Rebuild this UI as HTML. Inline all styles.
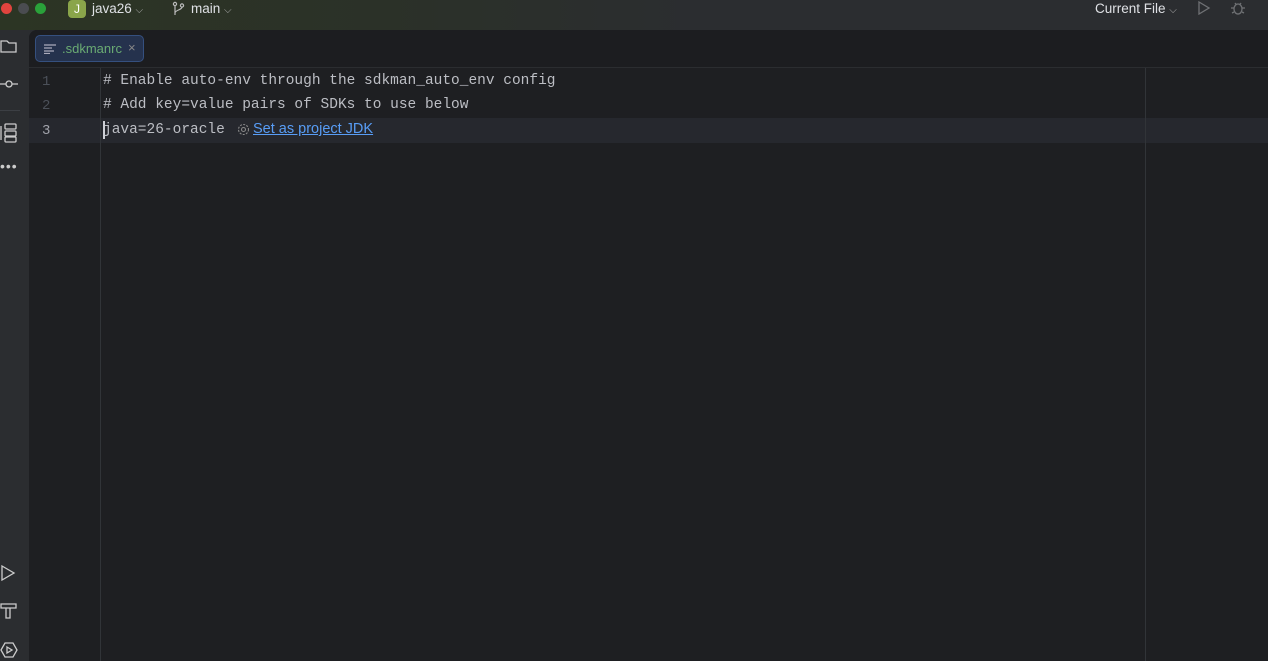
<!DOCTYPE html>
<html><head><meta charset="utf-8"><style>
*{margin:0;padding:0;box-sizing:border-box}
body{width:1268px;height:661px;overflow:hidden;background:#2b2d30;font-family:"Liberation Sans",sans-serif;position:relative}
.title{position:absolute;left:0;top:0;width:1268px;height:30px;background:linear-gradient(90deg,#2c3524 0%,#2b3128 30%,#2b2d30 55%)}
.dot{position:absolute;top:3px;width:11px;height:11px;border-radius:50%}
.t{position:absolute;color:#dfe1e5;font-size:13.5px;top:1px}
.side{position:absolute;left:0;top:30px;width:29px;height:631px;background:#2b2d30}
.ed{position:absolute;left:29px;top:30px;width:1239px;height:631px;background:#1e1f22;border-top-left-radius:8px}
.tab{position:absolute;left:35px;top:35px;width:109px;height:27px;background:#25324d;border:1px solid #35507f;border-radius:5px}
.code{position:absolute;font-family:"Liberation Mono",monospace;font-size:14.5px;color:#bcbec4;white-space:pre}
.ln{position:absolute;font-family:"Liberation Mono",monospace;font-size:14px;color:#4b5059}
svg{position:absolute}
</style></head><body>
<div class="title">
<div class="dot" style="left:1px;background:#e0443e"></div>
<div class="dot" style="left:18px;background:#4a4c50"></div>
<div class="dot" style="left:35px;background:#2aa13a"></div>
<div style="position:absolute;left:68px;top:0;width:18px;height:18px;background:#8aa54a;border-radius:4px;color:#fff;font-size:12px;text-align:center;line-height:18px">J</div>
<div class="t" style="left:92px">java26 <span style="font-size:10px;color:#aaa">⌵</span></div>
<svg style="left:171px;top:1px" width="16" height="16" viewBox="0 0 16 16" fill="none" stroke="#bbb" stroke-width="1.2"><circle cx="4" cy="3" r="1.6"/><circle cx="11" cy="4.5" r="1.6"/><path d="M4 5v9M11 6c0 3-7 3-7 6"/></svg>
<div class="t" style="left:191px">main <span style="font-size:10px;color:#aaa">⌵</span></div>
<div class="t" style="left:1095px">Current File <span style="font-size:10px;color:#aaa">⌵</span></div>
<svg style="left:1197px;top:1px" width="14" height="14" viewBox="0 0 14 14" fill="none" stroke="#6f7174" stroke-width="1.3"><path d="M2 1l10 6-10 6z"/></svg>
<svg style="left:1230px;top:0px" width="16" height="16" viewBox="0 0 16 16" fill="none" stroke="#6f7174" stroke-width="1.3"><ellipse cx="8" cy="9" rx="4" ry="5"/><path d="M1 8h3M12 8h3M2 13l2-1M14 13l-2-1M5 3l1.5 2M11 3l-1.5 2"/></svg>
</div>
<div class="side">
<svg style="left:0;top:9px" width="18" height="15" viewBox="0 0 18 15" fill="none" stroke="#ccc" stroke-width="1.3"><path d="M1 2h6l2 2h7v9H1z"/></svg>
<svg style="left:0;top:48px" width="20" height="12" viewBox="0 0 20 12" fill="none" stroke="#ccc" stroke-width="1.3"><circle cx="9" cy="6" r="3"/><path d="M0 6h6M12 6h6"/></svg>
<div style="position:absolute;left:0;top:80px;width:20px;height:1px;background:#3c3f44"></div>
<svg style="left:0;top:93px" width="18" height="20" viewBox="0 0 18 20" fill="none" stroke="#ccc" stroke-width="1.3"><rect x="5" y="1" width="11" height="5" rx="1"/><rect x="5" y="8" width="11" height="5" rx="1"/><rect x="5" y="14" width="11" height="5" rx="1"/><path d="M1 3v14"/></svg>
<div style="position:absolute;left:0;top:128px;color:#ccc;font-size:14px;letter-spacing:1px">•••</div>
<svg style="left:0;top:535px" width="16" height="16" viewBox="0 0 16 16" fill="none" stroke="#ccc" stroke-width="1.3"><path d="M2 1l12 7-12 7z"/></svg>
<svg style="left:0;top:572px" width="18" height="18" viewBox="0 0 18 18" fill="none" stroke="#ccc" stroke-width="1.3"><path d="M1 2h15v4H1zM6 6v10h4V6"/></svg>
<svg style="left:0;top:611px" width="18" height="18" viewBox="0 0 18 18" fill="none" stroke="#ccc" stroke-width="1.3"><path d="M5 2h8l4 7-4 7H5L1 9z"/><path d="M7 6l5 3-5 3z"/></svg>
</div>
<div class="ed">
<div style="position:absolute;left:0;top:0;width:1239px;height:37px;background:#1c1d20;border-top-left-radius:8px"></div>
<div style="position:absolute;left:0;top:37px;width:1239px;height:1px;background:#2b2d30"></div>
<div style="position:absolute;left:0;top:88px;width:1239px;height:25px;background:#26282e"></div>
<div style="position:absolute;left:71px;top:38px;width:1px;height:593px;background:#313438"></div>
<div style="position:absolute;left:1116px;top:38px;width:1px;height:593px;background:#313438"></div>
</div>
<div class="tab">
<svg style="left:8px;top:8px" width="12" height="10" viewBox="0 0 12 10" stroke="#aab" stroke-width="1.2"><path d="M0 1h12M0 4h8M0 7h10M0 9.5h6"/></svg>
<div style="position:absolute;left:26px;top:5px;color:#6aab73;font-size:13px">.sdkmanrc</div>
<div style="position:absolute;left:92px;top:4px;color:#888;font-size:13px">×</div>
</div>
<div class="ln" style="left:42px;top:74px">1</div>
<div class="ln" style="left:42px;top:98px">2</div>
<div class="ln" style="left:42px;top:123px;color:#a1a3ab">3</div>
<div class="code" style="left:103px;top:73px"># Enable auto-env through the sdkman_auto_env config</div>
<div class="code" style="left:103px;top:97px"># Add key=value pairs of SDKs to use below</div>
<div class="code" style="left:103px;top:122px">java=26-oracle</div>
<div style="position:absolute;left:103px;top:121px;width:2px;height:18px;background:#ced0d6"></div>
<svg style="left:237px;top:123px" width="13" height="13" viewBox="0 0 13 13" fill="none" stroke="#888" stroke-width="1.1"><circle cx="6.5" cy="6.5" r="2"/><circle cx="6.5" cy="6.5" r="5" stroke-dasharray="2 1.3"/></svg>
<div style="position:absolute;left:253px;top:121px;color:#589df6;font-size:14.5px;text-decoration:underline">Set as project JDK</div>
</body></html>
